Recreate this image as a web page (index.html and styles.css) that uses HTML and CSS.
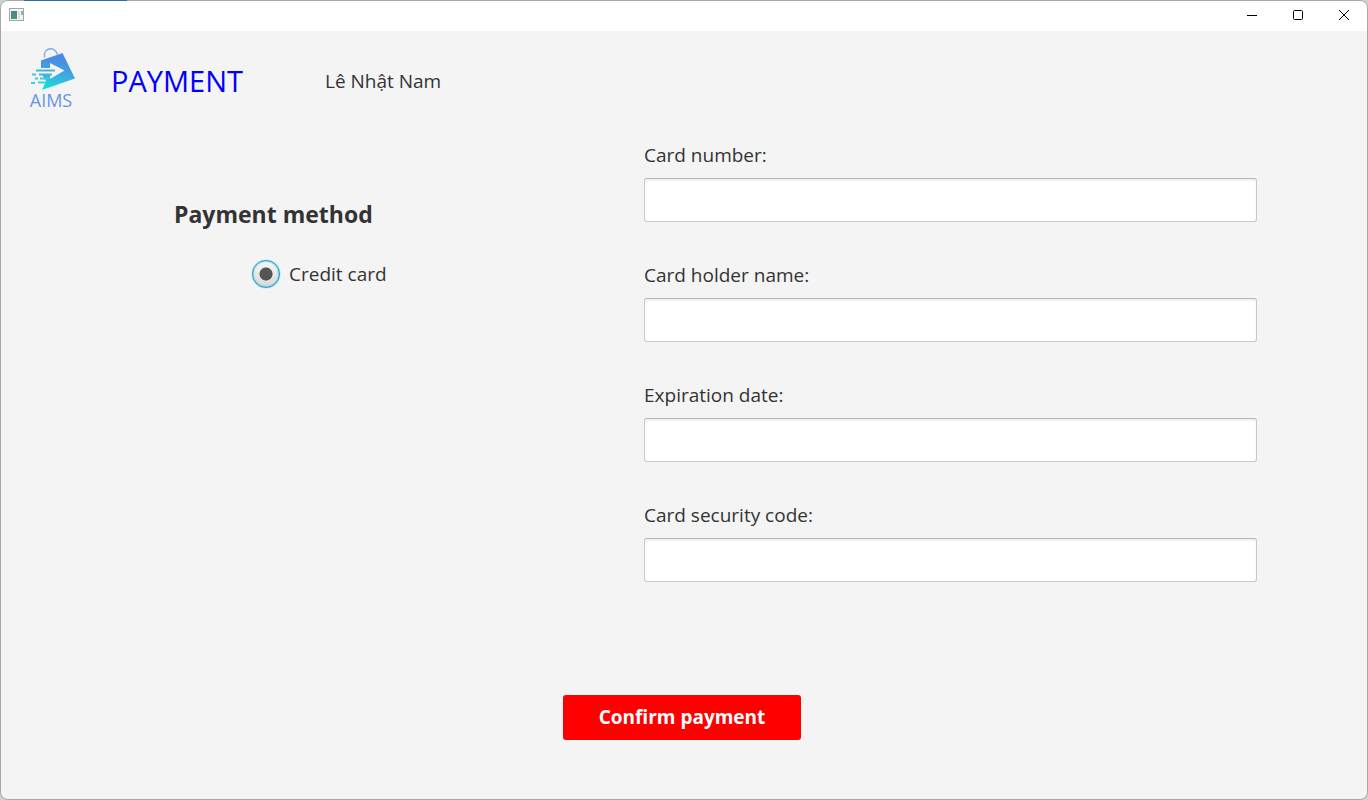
FILE: index.html
```html
<!DOCTYPE html>
<html lang="en">
<head>
<meta charset="utf-8">
<title>Payment</title>
<link rel="stylesheet" href="styles.css">
</head>
<body>
<div class="desktop-accent"></div>
<div class="window">
  <div class="titlebar">
    <svg class="app-icon" width="16" height="14" viewBox="0 0 16 14" aria-hidden="true">
      <defs><linearGradient id="pane" x1="0" y1="0" x2="0" y2="1"><stop offset="0" stop-color="#4a80ab"/><stop offset="1" stop-color="#4f9a60"/></linearGradient></defs>
      <rect x="0.5" y="0.5" width="14" height="12" fill="#f4f4f4" stroke="#a3a6a8"/>
      <rect x="2" y="3" width="6" height="8" fill="url(#pane)"/>
      <rect x="9" y="3" width="2" height="8" fill="#dcdfe2"/>
      <rect x="12" y="3" width="2" height="4" fill="#8ab5a4"/>
    </svg>
    <div class="window-buttons">
      <button class="window-button" type="button" aria-label="Minimize"><svg width="12" height="12" viewBox="0 0 12 12"><path d="M1 6.500h10"/></svg></button>
      <button class="window-button" type="button" aria-label="Maximize"><svg width="12" height="12" viewBox="0 0 12 12"><rect x="1.5" y="1.5" width="9" height="9" rx="1"/></svg></button>
      <button class="window-button" type="button" aria-label="Close"><svg width="12" height="12" viewBox="0 0 12 12"><path d="M1 1l10 10M11 1L1 11"/></svg></button>
    </div>
  </div>
  <header class="header">
    <div class="logo">
      <svg width="48" height="44" viewBox="0 0 48 44" aria-hidden="true">
        <defs><linearGradient id="bag" x1="0.4" y1="0" x2="0.25" y2="1"><stop offset="0.15" stop-color="#4a8be3"/><stop offset="0.55" stop-color="#3fa9e2"/><stop offset="1" stop-color="#14e4d8"/></linearGradient></defs>
        <path d="M17.500 11.500C16 1 28 0 30.500 8.500" fill="none" stroke="#86aeea" stroke-width="1.600"/>
        <path d="M14 14.500L35.500 7 48 32.500 15 44 19 35 14 27Z" fill="url(#bag)"/>
        <path d="M23 17L37.500 24.500 23 33V29H13V22H23Z" fill="#f4f4f4"/>
        <path d="M9 24.500H28M12 28.500H25" fill="none" stroke="#45b2e0" stroke-width="2"/>
        <path d="M5 28.500H9M8 32.500H11M13 32.500H22" fill="none" stroke="#45c5e0" stroke-width="2"/>
        <path d="M4 37H8M11 36.500H20" fill="none" stroke="#35d5dc" stroke-width="2"/>
      </svg>
      <span class="logo-text">AIMS</span>
    </div>
    <h1 class="title">PAYMENT</h1>
    <span class="user">Lê Nhật Nam</span>
  </header>
  <form class="form" id="payment">
    <fieldset class="method">
      <legend class="method-title">Payment method</legend>
      <label class="method-option"><input class="radio" type="radio" name="method" checked>Credit card</label>
    </fieldset>
    <div class="fields">
      <div class="field"><label class="label" for="number">Card number:</label><input class="input" id="number" type="text"></div>
      <div class="field"><label class="label" for="holder">Card holder name:</label><input class="input" id="holder" type="text"></div>
      <div class="field"><label class="label" for="expiry">Expiration date:</label><input class="input" id="expiry" type="text"></div>
      <div class="field"><label class="label" for="code">Card security code:</label><input class="input" id="code" type="text"></div>
    </div>
  </form>
  <div class="actions">
    <button class="confirm" type="submit" form="payment">Confirm payment</button>
  </div>
</div>
</body>
</html>
```

FILE: styles.css
```css
* {
  box-sizing: border-box;
}

body {
  margin: 0;
  min-height: 100vh;
  display: flex;
  background: #cfcfcf;
  color: #333;
  font-family: "Open Sans", "Noto Sans", sans-serif;
  font-size: 19px;
}

.desktop-accent {
  position: absolute;
  z-index: 1;
  top: 0;
  left: 24px;
  width: 103px;
  height: 1px;
  background: #2e6da4;
}

.window {
  flex: 1;
  display: flex;
  flex-direction: column;
  overflow: hidden;
  background: #f4f4f4;
  border: 1px solid #a8a8a8;
  border-radius: 8px;
}

.titlebar {
  display: flex;
  justify-content: space-between;
  align-items: center;
  height: 30px;
  padding: 0 0 2px 8px;
  background: #fff;
}

.window-buttons {
  display: flex;
}

.window-button {
  display: flex;
  align-items: center;
  justify-content: center;
  width: 46px;
  height: 28px;
  padding: 0;
  border: 0;
  background: none;
}

.window-button svg {
  fill: none;
  stroke: #000;
  stroke-width: 1;
}

.header {
  display: flex;
  align-items: center;
  height: 100px;
  padding-left: 26px;
}

.logo {
  display: flex;
  flex-direction: column;
  align-items: center;
  width: 48px;
  margin-right: 36px;
  padding-bottom: 6px;
}

.logo-text {
  color: #6795e0;
  font-size: 18px;
  line-height: 20px;
}

.title {
  width: 214px;
  margin: 0;
  padding-bottom: 2px;
  color: #00f;
  font-size: 29px;
  font-weight: 400;
}

.form {
  display: grid;
  grid-template-columns: 470fr 613fr;
  padding: 9px 110px 0 173px;
}

.method {
  min-width: 0;
  margin: 0;
  padding: 58px 0 0;
  border: 0;
}

.method-title {
  float: left;
  width: 100%;
  padding: 0;
  font-size: 23px;
  font-weight: 700;
  line-height: 32px;
}

.method-option {
  display: flex;
  clear: both;
  align-items: center;
  gap: 9px;
  padding: 30px 0 0 78px;
}

.radio {
  appearance: none;
  width: 28px;
  height: 28px;
  margin: 0;
  border: 1px solid #189fd0;
  border-radius: 50%;
  background: radial-gradient(circle, #555 6px, transparent 7px), linear-gradient(#f8f8f8, #d8d8d8);
  box-shadow: 0 0 1px #189fd0, inset 0 0 2px #189fd0;
}

.fields {
  display: grid;
  gap: 38px;
}

.field {
  display: grid;
  gap: 8px;
}

.label {
  line-height: 30px;
}

.input {
  width: 100%;
  height: 44px;
  padding: 0 12px;
  border: 1px solid #c8c8c8;
  border-top-color: #b5b5b5;
  border-radius: 3px;
  background: #fff;
  box-shadow: inset 0 2px 2px #f0f0f0;
  color: inherit;
  font: inherit;
}

.input:focus {
  outline: 1px solid #039ed3;
}

.actions {
  display: flex;
  justify-content: center;
  padding: 113px 4px 0 0;
}

.confirm {
  width: 238px;
  height: 45px;
  padding: 0 0 2px;
  border: 0;
  border-radius: 3px;
  background: #f00;
  color: #fff;
  font: inherit;
  font-weight: 700;
}
```
